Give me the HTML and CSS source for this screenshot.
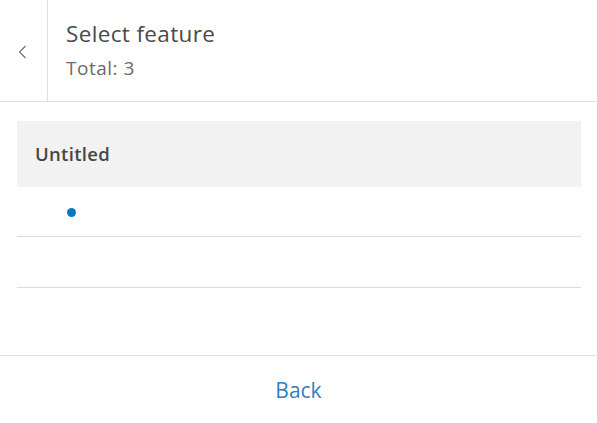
FILE: index.html
```html
<!DOCTYPE html>
<html>
<head>
<meta charset="utf-8">
<link rel="stylesheet" href="styles.css">
</head>
<body>
<div class="panel">
  <header class="header">
    <button class="back-btn" aria-label="Back">
      <svg width="16" height="16" viewBox="0 0 16 16"><path d="M11.5 2 L5.5 8 L11.5 14" fill="none" stroke="#6a6a6a" stroke-width="1.1"/></svg>
    </button>
    <div class="heading">
      <div class="title">Select feature</div>
      <div class="subtitle">Total: 3</div>
    </div>
  </header>
  <main class="content">
    <div class="group-title">Untitled</div>
    <div class="row"><span class="dot"></span></div>
    <div class="row"></div>
  </main>
  <footer class="footer">
    <button class="link-btn">Back</button>
  </footer>
</div>
</body>
</html>
```

FILE: styles.css
```css
html, body {
  margin: 0;
  height: 100%;
  background: #fff;
}
.panel {
  height: 100%;
  display: flex;
  flex-direction: column;
  font-family: "Open Sans", Lato, sans-serif;
}
.header {
  display: flex;
  height: 101px;
  border-bottom: 1px solid #e0e0e0;
  flex-shrink: 0;
}
.back-btn {
  width: 48px;
  border: 0;
  border-right: 1px solid #e0e0e0;
  background: none;
  padding: 0;
  display: flex;
  align-items: center;
  justify-content: center;
  padding-right: 3px;
  padding-top: 2px;
}
.heading {
  padding-left: 18px;
  padding-top: 20px;
}
.title {
  font-size: 22.5px;
  letter-spacing: 0.35px;
  color: #4a4a4a;
  line-height: 28px;
}
.subtitle {
  font-size: 19px;
  letter-spacing: 0.5px;
  color: #6a6a6a;
  line-height: 24px;
  margin-top: 8px;
}
.content {
  flex: 1;
  padding: 19px 16px 0 17px;
}
.group-title {
  height: 66px;
  background: #f2f2f2;
  display: flex;
  align-items: center;
  padding-left: 18px;
  font-size: 18.5px;
  font-weight: 600;
  letter-spacing: 0.3px;
  color: #474747;
  padding-bottom: 1px;
  box-sizing: border-box;
}
.row {
  height: 49px;
  border-bottom: 1px solid #dcdcdc;
  display: flex;
  align-items: center;
  padding-left: 50px;
}
.row + .row {
  height: 50px;
}
.dot {
  width: 9px;
  height: 9px;
  border-radius: 50%;
  background: #0a79c4;
  margin-top: 1px;
}
.footer {
  height: 67px;
  border-top: 1px solid #e0e0e0;
  display: flex;
  align-items: center;
  justify-content: center;
  flex-shrink: 0;
}
.link-btn {
  border: 0;
  background: none;
  font-family: "Open Sans", Lato, sans-serif;
  font-size: 21px;
  color: #2d7fc1;
  padding: 0;
  margin-top: 1px;
}
```
